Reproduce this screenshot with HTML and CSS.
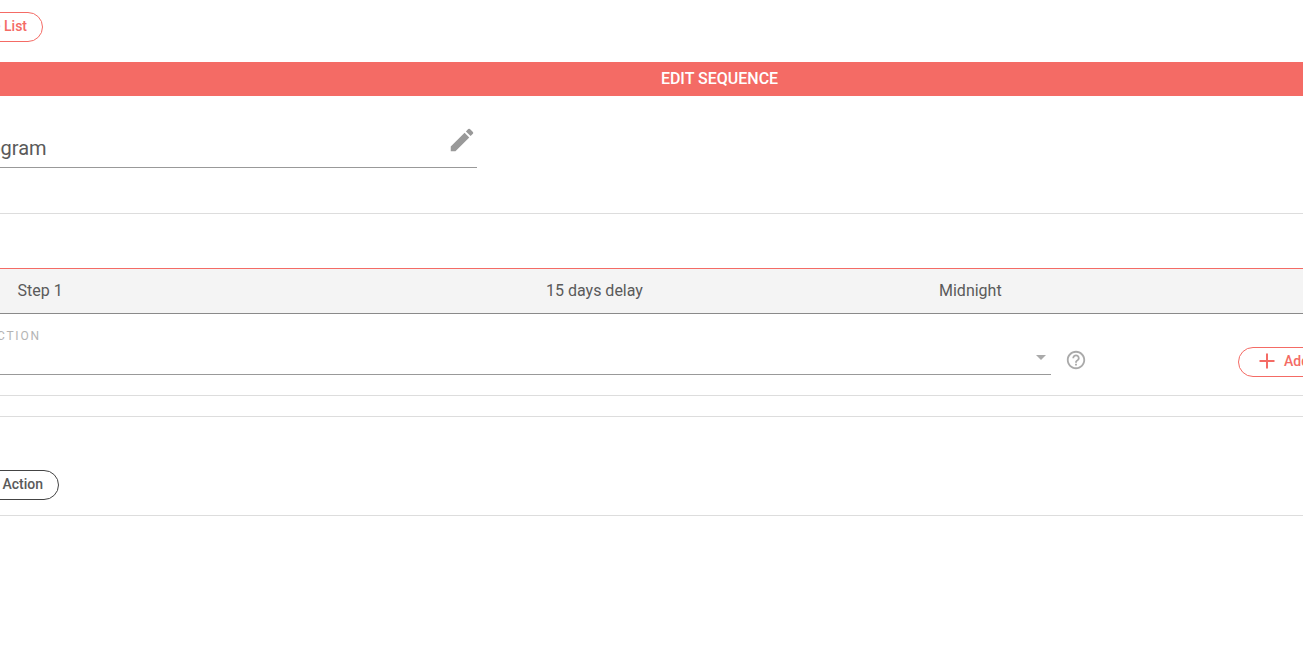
FILE: index.html
```
<!DOCTYPE html>
<html lang="en">
<head>
<meta charset="utf-8">
<title>Edit Sequence</title>
<link rel="stylesheet" href="styles.css">
</head>
<body>
<div class="page">
  <div class="top">
    <a class="pill pill-red back">Back to Sequence List</a>
  </div>
  <div class="banner">EDIT SEQUENCE</div>
  <div class="name-row">
    <div class="name-field">
      <span class="name-text">Program</span>
      <svg class="pencil" viewBox="0 0 24 24" width="30" height="30"><path d="M3 17.25V21h3.75L17.81 9.94l-3.75-3.75L3 17.25zM20.71 7.04a1 1 0 0 0 0-1.41l-2.34-2.34a1 1 0 0 0-1.41 0l-1.83 1.83 3.75 3.75 1.83-1.83z"/></svg>
    </div>
  </div>
  <div class="spacer-a"></div>
  <div class="step-head">
    <span class="step-name">Step 1</span>
    <span class="step-delay">15 days delay</span>
    <span class="step-time">Midnight</span>
  </div>
  <div class="action-row">
    <div class="select">
      <label class="select-label">SELECT ACTION</label>
      <div class="select-line"><span class="caret"></span></div>
    </div>
    <svg class="help" viewBox="0 0 24 24" width="22" height="22"><path d="M11 18h2v-2h-2v2zm1-16C6.48 2 2 6.48 2 12s4.48 10 10 10 10-4.48 10-10S17.52 2 12 2zm0 18c-4.41 0-8-3.59-8-8s3.59-8 8-8 8 3.59 8 8-3.59 8-8 8zm0-14c-2.21 0-4 1.79-4 4h2c0-1.1.9-2 2-2s2 .9 2 2c0 2-3 1.75-3 5h2c0-2.25 3-2.5 3-5 0-2.21-1.79-4-4-4z"/></svg>
    <a class="pill pill-red add">
      <svg class="plus" viewBox="0 0 16 16" width="16" height="16"><path d="M7 0.5h2v6.5h6.5v2H9v6.5H7V9H0.5V7H7z"/></svg>
      <span>Add</span>
    </a>
  </div>
  <div class="empty-row"></div>
  <div class="foot-row">
    <a class="pill pill-dark">Add Action</a>
  </div>
</div>
</body>
</html>
```
FILE: styles.css
```
html, body { margin: 0; padding: 0; height: 100%; overflow: hidden; background: #fff; }
body { font-family: Roboto, "Liberation Sans", sans-serif; color: #5a5a5a; }
.page { width: 1700px; margin-left: -131px; }
.top { height: 62px; padding-top: 12px; padding-left: 30px; box-sizing: border-box; }
.pill { display: inline-flex; align-items: center; box-sizing: border-box; height: 30px; border-radius: 15px; padding-bottom: 2px; font-size: 14px; font-weight: 500; background: #fff; white-space: nowrap; justify-content: flex-end; }
.pill-red { border: 1px solid #f46b65; color: #f46b65; }
.pill-dark { border: 1px solid #444; color: #5a5a5a; width: 160px; padding-right: 15px; }
.back { width: 144px; padding-right: 15px; }
.banner { height: 34px; line-height: 34px; background: #f46b65; color: #fff; text-align: center; font-size: 16px; font-weight: 500; padding-left: 1px; }
.name-row { border-bottom: 1px solid #ddd; box-sizing: border-box; padding-top: 25px; height: 118px; }
.name-field { width: 608px; height: 47px; border-bottom: 1px solid #999; box-sizing: border-box; display: flex; align-items: flex-end; justify-content: space-between; padding-left: 101px; }
.name-text { font-size: 20px; color: #5a5a5a; line-height: 38px; }
.pencil { fill: #999; margin-bottom: 12px; }
.spacer-a { height: 54px; }
.step-head { height: 46px; box-sizing: border-box; background: #f4f4f4; border-top: 1px solid #f46b65; border-bottom: 1px solid #8a8a8a; display: flex; align-items: center; font-size: 16px; color: #5a5a5a; padding-left: 148.5px; padding-bottom: 2px; }
.step-name { width: 528.5px; }
.step-delay { width: 393px; }
.action-row { height: 82px; box-sizing: border-box; border-bottom: 1px solid #ddd; display: flex; align-items: flex-start; }
.select { width: 1182px; margin-top: 15px; flex: none; }
.select-label { display: block; padding-left: 61px; font-size: 12px; letter-spacing: 1.8px; color: #b4b4b4; line-height: 14px; }
.select-line { height: 32px; box-sizing: border-box; border-bottom: 1px solid #999; position: relative; }
.caret { position: absolute; right: 5px; top: 12px; border-left: 5px solid transparent; border-right: 5px solid transparent; border-top: 5px solid #aaa; }
.help { fill: #aaa; margin: 35px 0 0 13.5px; flex: none; }
.add { width: 160px; margin: 33px 0 0 151.5px; justify-content: flex-start; padding-left: 20px; flex: none; }
.plus { fill: #f46b65; margin-right: 9px; }
.empty-row { height: 21px; box-sizing: border-box; border-bottom: 1px solid #ddd; }
.foot-row { height: 99px; box-sizing: border-box; border-bottom: 1px solid #ddd; padding-top: 53px; padding-left: 30px; }
```
